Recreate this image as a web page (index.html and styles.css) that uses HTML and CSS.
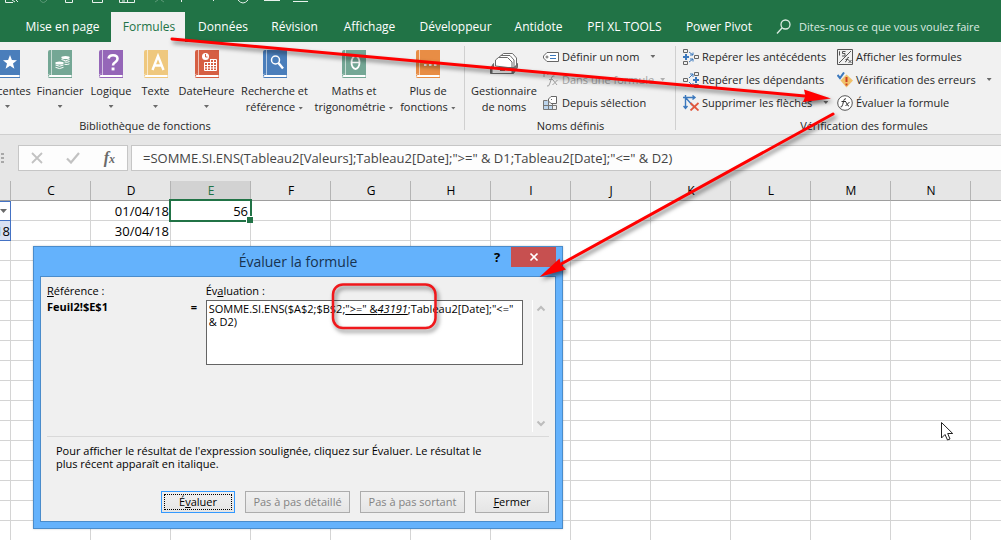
FILE: index.html
```
<!DOCTYPE html>
<html lang="fr">
<head>
<meta charset="utf-8">
<title>Évaluer la formule</title>
<link rel="stylesheet" href="styles.css">
</head>
<body>
<div class="app">
  <header class="top">
    <svg class="quick" width="320" height="4" viewBox="0 0 320 4" fill="none" stroke="#e8f1ec">
      <path d="M5.500 0V2.500H13M12 0l3 2M16 0l2 2M65.500 0V2.500H72.500V0M92.500 0V2.500H102.500V0M119.500 0V2.500H134.500V0M122 1h3M127.500 0v2M181.500 0v2M213.500 0v1M238 0q5 6 10 0M264 .500h16M293 1.500h15"/>
      <path stroke="#5c9877" d="M40 0q3 5 7 0M155 2l3-2M161 0l3 2"/>
    </svg>
    <nav class="tabs">
      <button class="tab">Mise en page</button>
      <button class="tab active">Formules</button>
      <button class="tab">Données</button>
      <button class="tab">Révision</button>
      <button class="tab">Affichage</button>
      <button class="tab">Développeur</button>
      <button class="tab">Antidote</button>
      <button class="tab">PFI XL TOOLS</button>
      <button class="tab">Power Pivot</button>
      <label class="tell"><svg width="16" height="16" viewBox="0 0 16 16" fill="none" stroke="#dcebe2" stroke-width="1.300"><circle cx="9.500" cy="5.500" r="4.500"/><path d="M6.200 8.800L1 14.500"/></svg><input type="text" placeholder="Dites-nous ce que vous voulez faire"></label>
    </nav>
  </header>

  <section class="ribbon">
    <div class="group library">
      <div class="bigs">
        <button class="big"><svg class="book blue" viewBox="0 0 24 28"><path class="c" d="M0 2a2 2 0 0 1 2-2H24V24H3a2 2 0 0 0-3 2z"/><path class="p" d="M0 26.500q0-2 2-2H24v3H2q-2 0-2-1"/><path class="s" d="M3.500 0v25"/><path fill="#fff" d="M14 5l1.900 5 5.100.200-4 3.300 1.400 5.200L14 15.800l-4.400 2.900L11 13.500l-4-3.300 5.100-.200z"/></svg><span>Récentes</span><i class="arr"></i></button>
        <button class="big"><svg class="book green" viewBox="0 0 24 28"><path class="c" d="M0 2a2 2 0 0 1 2-2H24V24H3a2 2 0 0 0-3 2z"/><path class="p" d="M0 26.500q0-2 2-2H24v3H2q-2 0-2-1"/><path class="s" d="M3.500 0v25"/><g fill="#fff"><ellipse cx="17.500" cy="7.500" rx="4.200" ry="1.500"/><ellipse cx="11.500" cy="13" rx="4.200" ry="1.500"/></g><path fill="none" stroke="#fff" d="M13.500 9.500q4 2.500 8 0M16.500 12q3 .700 5-.500M16.500 14.300q3 .700 5-.500M7.500 15q4 2.500 8 0M7.500 17.300q4 2.500 8 0"/></svg><span>Financier</span><i class="arr"></i></button>
        <button class="big"><svg class="book purple" viewBox="0 0 24 28"><path class="c" d="M0 2a2 2 0 0 1 2-2H24V24H3a2 2 0 0 0-3 2z"/><path class="p" d="M0 26.500q0-2 2-2H24v3H2q-2 0-2-1"/><path class="s" d="M3.500 0v25"/><path fill="none" stroke="#fff" stroke-width="2.600" d="M9.500 8.500Q10 5.300 14 5.300q4.500 0 4.500 3.500 0 2-2.200 3.300-2.300 1.200-2.300 3.400"/><path fill="#fff" d="M12.600 17.500h2.900v2.900h-2.900z"/></svg><span>Logique</span><i class="arr"></i></button>
        <button class="big"><svg class="book yellow" viewBox="0 0 24 28"><path class="c" d="M0 2a2 2 0 0 1 2-2H24V24H3a2 2 0 0 0-3 2z"/><path class="p" d="M0 26.500q0-2 2-2H24v3H2q-2 0-2-1"/><path class="s" d="M3.500 0v25"/><path fill="none" stroke="#fff" stroke-width="2.400" d="M8.500 20L14 6l5.500 14M10.500 15.500h7"/></svg><span>Texte</span><i class="arr"></i></button>
        <button class="big"><svg class="book red" viewBox="0 0 24 28"><path class="c" d="M0 2a2 2 0 0 1 2-2H24V24H3a2 2 0 0 0-3 2z"/><path class="p" d="M0 26.500q0-2 2-2H24v3H2q-2 0-2-1"/><path class="s" d="M3.500 0v25"/><circle cx="10.500" cy="6.500" r="3.500" fill="#fff"/><path fill="none" stroke="#d65f43" d="M10.500 4v3h2"/><path fill="none" stroke="#fff" d="M15 9.500h6.500v11h-12v-8M9.500 12.500h12M9.500 15.500h12M9.500 18h12M12.500 12v8M15.500 9.500v11M18.500 9.500v11"/></svg><span>DateHeure</span><i class="arr"></i></button>
        <button class="big"><svg class="book blue" viewBox="0 0 24 28"><path class="c" d="M0 2a2 2 0 0 1 2-2H24V24H3a2 2 0 0 0-3 2z"/><path class="p" d="M0 26.500q0-2 2-2H24v3H2q-2 0-2-1"/><path class="s" d="M3.500 0v25"/><circle cx="12.500" cy="10" r="4" fill="none" stroke="#fff" stroke-width="1.500"/><path stroke="#fff" stroke-width="2.400" d="M15.500 13l4.500 5.500"/></svg><span>Recherche et<br>référence<i class="arr in"></i></span></button>
        <button class="big"><svg class="book green" viewBox="0 0 24 28"><path class="c" d="M0 2a2 2 0 0 1 2-2H24V24H3a2 2 0 0 0-3 2z"/><path class="p" d="M0 26.500q0-2 2-2H24v3H2q-2 0-2-1"/><path class="s" d="M3.500 0v25"/><ellipse cx="13.500" cy="12.500" rx="4" ry="6.500" fill="none" stroke="#fff" stroke-width="1.800"/><path stroke="#fff" stroke-width="1.500" d="M10 12.500h7"/></svg><span>Maths et<br>trigonométrie<i class="arr in"></i></span></button>
        <button class="big"><svg class="book orange" viewBox="0 0 24 28"><path class="c" d="M0 2a2 2 0 0 1 2-2H24V24H3a2 2 0 0 0-3 2z"/><path class="p" d="M0 26.500q0-2 2-2H24v3H2q-2 0-2-1"/><path class="s" d="M3.500 0v25"/><path fill="#fff" d="M8 14h2.500v2H8zM13 14h2.500v2H13zM18 14h2.500v2H18z"/></svg><span>Plus de<br>fonctions<i class="arr in"></i></span></button>
      </div>
      <div class="caption">Bibliothèque de fonctions</div>
    </div>

    <div class="group names">
      <div class="cols">
        <button class="big"><svg class="mgr" viewBox="0 0 28 28" stroke="#6b6b6b" fill="#fff"><path d="M10.500 9V6l3-2.500h9l4 4.500v9h-4z"/><path d="M8 11V8l3-2.500h9l4 4.500v8h-4z"/><path d="M5.500 16v-6l3-2.500h9l4.500 4.500v6z"/><path fill="#777" d="M.500 23.500v-5l3-5v4h21l3-4v4l-4 6z"/><path fill="#fff" d="M2 18h20v5.500H2z"/><path d="M10 20.500h5"/></svg><span>Gestionnaire<br>de noms</span></button>
        <div class="list">
          <button class="row"><svg viewBox="0 0 16 16" fill="none"><path stroke="#666" fill="#fff" d="M15.500 3.500H4L.500 7v2L4 12.500h11.500z"/><circle cx="4" cy="8" r="1" stroke="#666"/><path stroke="#3b78bd" d="M7 6.500h6M7 9.500h6"/></svg><span>Définir un nom</span><i class="arr far"></i></button>
          <button class="row off"><svg viewBox="0 0 16 16" fill="none" stroke="#a0a0a0"><path d="M1 5q-1-4 2-4 2 0 2 2M4 14q2 1 3-3l1.500-5q.800-3 3-2M6 7.500h4M10 8l4 5M14.500 8l-5 5"/></svg><span>Dans une formule</span><i class="arr in"></i></button>
          <button class="row"><svg viewBox="0 0 16 16" fill="none"><path fill="#bcd5ed" d="M1 6h5v4h4v4H1z"/><path stroke="#777" d="M.500 5.500v9h13v-4M.500 10.500h13M5.500 6v8M9.500 9v6M.500 5.500h4"/><path fill="#fff" stroke="#666" d="M13.500 1.500H8L5.500 4v2L8 8.500h5.500z"/><path stroke="#666" d="M8 4.500h1"/></svg><span>Depuis sélection</span></button>
        </div>
      </div>
      <div class="caption">Noms définis</div>
    </div>

    <div class="group audit">
      <div class="cols">
        <div class="list first">
          <button class="row"><svg viewBox="0 0 16 16" fill="none" stroke="#666"><path d="M.500.500h4v3h-4zM.500 12.500h4v3h-4zM11.500 6.500h4v3h-4z"/><path stroke="#3b78bd" stroke-width="2" d="M0 8h6M3 5v6"/><path stroke="#3b78bd" d="M6 3l4 3M10 3.500V6H7M6 13l4-3M10 12.500V10H7"/></svg><span>Repérer les antécédents</span></button>
          <button class="row"><svg viewBox="0 0 16 16" fill="none" stroke="#666"><path d="M11.500.500h4v3h-4zM11.500 12.500h4v3h-4zM.500 6.500h4v3h-4z"/><path stroke="#3b78bd" stroke-width="2" d="M10 8h6M13 5v6"/><path stroke="#3b78bd" d="M6 6l4-4M7 2h3v3M6 10l4 4M7 14h3v-3"/></svg><span>Repérer les dépendants</span></button>
          <button class="row"><svg viewBox="0 0 16 16" fill="none" stroke="#3b78bd"><path stroke-width="1.400" d="M2.500 13V2.500H12M3 3l7 8M.500 11l2 2.500 2-2.500M9.500.500l2.500 2-2.500 2M0 2.500h5M2.500 0v5"/><path stroke="#e1583e" stroke-width="1.800" d="M7.500 8l8 7.500M15.500 8l-8 7.500"/></svg><span>Supprimer les flèches</span><i class="arr far"></i></button>
        </div>
        <div class="list">
          <button class="row"><svg viewBox="0 0 16 16" fill="none" stroke="#555"><path d="M.500.500h15v15H.500zM2 14L14 2"/><path d="M2.500 2.500v4M2 3h1M8.500 2.500h-3v2h2.500v2.500H5M8 13q1.500 0 2-3 .400-2 2-1.500M8.500 10.500h3M11.500 11l3 3M14.500 11l-3 3"/></svg><span>Afficher les formules</span></button>
          <button class="row"><svg viewBox="0 0 16 16" fill="none"><path fill="#f0c069" d="M9.500 2.500l6.500 6-6.500 7-6-7z"/><path stroke="#cf3f22" stroke-width="2" d="M9.500 5v5M9.500 11.500v2"/><path stroke="#3b78bd" stroke-width="2" d="M.500 3l2.500 3L7 .500"/></svg><span>Vérification des erreurs</span><i class="arr far"></i></button>
          <button class="row"><svg viewBox="0 0 16 16" fill="none" stroke="#555"><circle cx="8" cy="8" r="7.300" fill="#fff"/><path stroke="#333" d="M3.500 12q1.500.500 2.200-2.500L6.800 5.500Q7.300 3.300 9 3.800M4.500 6.500h4.500M8.500 7q1 0 1.500 2t2 2M12.500 7l-4 4"/></svg><span>Évaluer la formule</span></button>
        </div>
      </div>
      <div class="caption">Vérification des formules</div>
    </div>
  </section>

  <section class="fbar">
    <div class="grip"></div>
    <div class="tools">
      <button aria-label="Annuler"><svg width="12" height="12" viewBox="0 0 12 12" stroke="#c2c2c2" stroke-width="1.800"><path d="M1 1l10 10M11 1L1 11"/></svg></button>
      <button aria-label="Entrer"><svg width="14" height="12" viewBox="0 0 14 12" fill="none" stroke="#c2c2c2" stroke-width="2.200"><path d="M1 6.500L5 10.500 13 1"/></svg></button>
      <button aria-label="Insérer une fonction" class="fx">f<small>x</small></button>
    </div>
    <input class="formula" type="text" aria-label="Formule" value='=SOMME.SI.ENS(Tableau2[Valeurs];Tableau2[Date];"&gt;=" &amp; D1;Tableau2[Date];"&lt;=" &amp; D2)'>
  </section>

  <main class="sheet">
    <table>
      <colgroup><col class="edge"><col span="12" class="std"><col></colgroup>
      <thead><tr><th></th><th>C</th><th>D</th><th class="sel">E</th><th>F</th><th>G</th><th>H</th><th>I</th><th>J</th><th>K</th><th>L</th><th>M</th><th>N</th><th></th></tr></thead>
      <tbody>
        <tr><td class="filter"><i class="arr"></i></td><td></td><td>01/04/18</td><td class="cur">56</td><td></td><td></td><td></td><td></td><td></td><td></td><td></td><td></td><td></td><td></td></tr>
        <tr><td class="band">18</td><td></td><td>30/04/18</td><td></td><td></td><td></td><td></td><td></td><td></td><td></td><td></td><td></td><td></td><td></td></tr>
        <tr><td></td><td></td><td></td><td></td><td></td><td></td><td></td><td></td><td></td><td></td><td></td><td></td><td></td><td></td></tr>
        <tr><td></td><td></td><td></td><td></td><td></td><td></td><td></td><td></td><td></td><td></td><td></td><td></td><td></td><td></td></tr>
        <tr><td></td><td></td><td></td><td></td><td></td><td></td><td></td><td></td><td></td><td></td><td></td><td></td><td></td><td></td></tr>
        <tr><td></td><td></td><td></td><td></td><td></td><td></td><td></td><td></td><td></td><td></td><td></td><td></td><td></td><td></td></tr>
        <tr><td></td><td></td><td></td><td></td><td></td><td></td><td></td><td></td><td></td><td></td><td></td><td></td><td></td><td></td></tr>
        <tr><td></td><td></td><td></td><td></td><td></td><td></td><td></td><td></td><td></td><td></td><td></td><td></td><td></td><td></td></tr>
        <tr><td></td><td></td><td></td><td></td><td></td><td></td><td></td><td></td><td></td><td></td><td></td><td></td><td></td><td></td></tr>
        <tr><td></td><td></td><td></td><td></td><td></td><td></td><td></td><td></td><td></td><td></td><td></td><td></td><td></td><td></td></tr>
        <tr><td></td><td></td><td></td><td></td><td></td><td></td><td></td><td></td><td></td><td></td><td></td><td></td><td></td><td></td></tr>
        <tr><td></td><td></td><td></td><td></td><td></td><td></td><td></td><td></td><td></td><td></td><td></td><td></td><td></td><td></td></tr>
        <tr><td></td><td></td><td></td><td></td><td></td><td></td><td></td><td></td><td></td><td></td><td></td><td></td><td></td><td></td></tr>
        <tr><td></td><td></td><td></td><td></td><td></td><td></td><td></td><td></td><td></td><td></td><td></td><td></td><td></td><td></td></tr>
        <tr><td></td><td></td><td></td><td></td><td></td><td></td><td></td><td></td><td></td><td></td><td></td><td></td><td></td><td></td></tr>
        <tr><td></td><td></td><td></td><td></td><td></td><td></td><td></td><td></td><td></td><td></td><td></td><td></td><td></td><td></td></tr>
        <tr><td></td><td></td><td></td><td></td><td></td><td></td><td></td><td></td><td></td><td></td><td></td><td></td><td></td><td></td></tr>
      </tbody>
    </table>
  </main>

  <div class="dialog" role="dialog" aria-label="Évaluer la formule">
    <div class="dtitle">
      <h1>Évaluer la formule</h1>
      <div class="dctl"><button class="help" aria-label="Aide">?</button><button class="close" aria-label="Fermer la fenêtre"><svg width="10" height="10" viewBox="0 0 10 10" stroke="#fff" stroke-width="1.700"><path d="M1.500 1.500l7 7M8.500 1.500l-7 7"/></svg></button></div>
    </div>
    <div class="dbody">
      <div class="evalrow">
        <div class="ref"><div><u>R</u>éférence :</div><b>Feuil2!$E$1</b></div>
        <b class="eq">=</b>
        <div class="ev"><div>Év<u>a</u>luation :</div><div class="expr">SOMME.SI.ENS($A$2;$B$2;<u>"&gt;=" &amp;<em>43191</em></u>;Tableau2[Date];"&lt;=" &amp; D2)</div></div>
        <div class="sb"><svg width="10" height="7" viewBox="0 0 10 7" fill="none" stroke="#bdbdbd" stroke-width="2"><path d="M1.500 5.500L5 2l3.500 3.500"/></svg><svg width="10" height="7" viewBox="0 0 10 7" fill="none" stroke="#bdbdbd" stroke-width="2"><path d="M1.500 1.500L5 5l3.500-3.500"/></svg></div>
      </div>
      <p class="hint">Pour afficher le résultat de l'expression soulignée, cliquez sur Évaluer. Le résultat le plus récent apparaît en italique.</p>
      <div class="btns">
        <button class="btn focus"><span>É<u>v</u>aluer</span></button>
        <button class="btn wide" disabled>Pas à pas détaillé</button>
        <button class="btn wide" disabled>Pas à pas sortant</button>
        <button class="btn"><span><u>F</u>ermer</span></button>
      </div>
    </div>
  </div>

  <svg class="notes" width="1001" height="540" viewBox="0 0 1001 540">
    <g class="ink">
      <path class="line" d="M172 39L810 96.500"/><path class="head" d="M831 98.500L804 89.500l1.500 6.500-2.500 6z"/>
      <path class="line" d="M833 114L562 263.500"/><path class="head" d="M539.500 277l20-18.500 1.500 6 5 5z"/>
      <rect class="ring" x="333" y="284.500" width="102.500" height="43.500" rx="10"/>
    </g>
    <path fill="#fff" stroke="#222" d="M941.500 422.500v15.500l3.500-3.500 2.500 5.500 2.500-1-2.300-5.500h5z"/>
  </svg>
</div>
</body>
</html>
```
FILE: styles.css
```
* { box-sizing: border-box; }
body {
  margin: 0;
  font: 11px/16px "Open Sans", "Noto Sans", sans-serif;
  color: #262626;
}
button, input { font: inherit; color: inherit; border: 0; padding: 0; margin: 0; background: none; }
svg { display: block; flex: none; }
.app { position: relative; height: 100vh; overflow: hidden; display: flex; flex-direction: column; }

/* title strip and tabs */
.top { background: #217346; }
.quick { margin-bottom: 8px; }
.tabs {
  display: grid;
  grid-template-columns: 97px 76px 72px 71px 79px 93px 73px 99px 90px 1fr;
  padding-left: 13px;
  height: 30px;
}
.tab { color: #fff; font-size: 12px; white-space: nowrap; padding-left: 2px; }
.tab.active { color: #217346; background: #f1f1f1; margin-left: 1px; margin-right: 1px; }
.tell { display: flex; align-items: center; gap: 7px; padding-left: 13px; color: #dcebe2; }
.tell input { flex: 1; min-width: 0; font-size: 11px; }
.tell input::placeholder { color: #dcebe2; opacity: 1; }

/* ribbon */
.ribbon {
  display: flex;
  height: 93px;
  overflow: hidden;
  background: #f1f1f1;
  border-bottom: 1px solid #cfcfcf;
}
.group { display: flex; flex-direction: column; justify-content: space-between; flex: none; position: relative; }
.library { margin-left: -19px; width: 484px; }
.library .caption { padding-right: 156px; }
.names { width: 211px; }
.audit { width: 376px; }
.library::after, .names::after {
  content: ""; position: absolute; right: 0; top: 4px; bottom: 4px; width: 1px; background: #d0d0d0;
}
.bigs { display: grid; grid-template-columns: 53px 52px 50px 39px 63px 73px 86px 62px; }
.big { display: flex; flex-direction: column; align-items: center; padding-top: 8px; white-space: nowrap; }
.big > span { margin-top: 5px; }
.big > .arr { margin-top: 6px; }
.book { width: 24px; height: 28px; }
.book .c { fill: var(--c); }
.book .p { fill: #fff; stroke: var(--c); }
.book .s { stroke: #fff; fill: none; opacity: .6; }
.blue { --c: #4a7ebb; }
.green { --c: #74a795; }
.purple { --c: #9566b8; }
.yellow { --c: #efc87e; }
.red { --c: #d65f43; }
.orange { --c: #e88d45; }
.mgr { width: 28px; height: 28px; }
.arr { display: block; flex: none; width: 5px; height: 3px; background: #6a6a6a; clip-path: polygon(0 0, 100% 0, 50% 100%); }
.arr.in { display: inline-block; vertical-align: middle; margin-left: 3px; }
.arr.far { margin-left: 8px; }
.caption { text-align: center; }
.cols { display: flex; }
.names .big { width: 78px; }
.list { display: flex; flex-direction: column; padding-top: 3px; }
.list.first { width: 161px; padding-left: 7px; }
.row { display: flex; align-items: center; height: 23px; gap: 3px; white-space: nowrap; }
.row svg { width: 16px; height: 16px; }
.row.off { color: #a6a6a6; }
.row.off .arr { background: #b0b0b0; }

/* formula bar */
.fbar { display: flex; height: 46px; padding: 10px 0; background: #e6e6e6; }
.grip { width: 3px; height: 11px; margin: 8px 14px 0 1px; background: repeating-linear-gradient(#a8a8a8 0 2px, transparent 2px 4px); }
.tools { display: flex; align-items: center; justify-content: space-between; width: 110px; padding: 0 12px; background: #fdfdfd; border: 1px solid #c6c6c6; }
.fx { font: italic bold 16px/20px "Liberation Serif", serif; color: #6a6a6a; }
.fx small { font-size: 12px; }
.formula { flex: 1; min-width: 0; margin-left: 3px; padding-left: 11px; font-size: 13px; color: #444; background: #fdfdfd; border: 1px solid #c6c6c6; border-right: 0; }

/* worksheet */
.sheet { flex: 1; background: #fff; overflow: hidden; }
table { width: 100%; table-layout: fixed; border-collapse: separate; border-spacing: 0; font-size: 13px; color: #000; }
.edge { width: 11px; }
.std { width: 80px; }
th { height: 20px; padding: 0 0 0 1px; font-weight: 400; font-size: 12px; line-height: 18px; background: #e6e6e6; border-right: 1px solid #b4b4b4; border-bottom: 1px solid #9e9e9e; }
th.sel { background: #d2d2d2; color: #217346; border-bottom: 0; }
td { height: 20px; padding: 0 1px 0 0; line-height: 18px; text-align: right; border-right: 1px solid #d4d4d4; border-bottom: 1px solid #d4d4d4; }
th:last-child, td:last-child { border-right: 0; }
td.cur { position: relative; padding-right: 2px; }
.cur::before { content: ""; position: absolute; inset: -2px; border: 2px solid #217346; }
.cur::after { content: ""; position: absolute; right: -3px; bottom: -3px; width: 6px; height: 6px; background: #217346; border: solid #fff; border-width: 1px 0 0 1px; }
td.filter { border: 1px solid #4472c4; border-left: 0; }
.filter .arr { width: 7px; height: 4px; }
td.band { direction: rtl; overflow: hidden; background: #d9e1f2; border-color: #4472c4; }

/* dialog window */
.dialog {
  position: absolute; left: 33px; top: 246px; width: 530px;
  padding: 0 6px 6px; background: #64b2fc; border: 1px solid #4a8ccb; color: #000;
  box-shadow: 0 0 2px rgba(0, 0, 0, .2);
}
.dtitle { position: relative; height: 29px; }
.dtitle h1 { margin: 0; font-size: 14px; font-weight: 400; line-height: 29px; text-align: center; color: #173350; }
.dctl { position: absolute; right: 0; top: 0; display: flex; height: 20px; }
.help { width: 28px; font-size: 13px; font-weight: 700; }
.close { display: flex; align-items: center; justify-content: center; width: 45px; background: #c75050; }
.dbody { padding: 6px 6px 8px; background: #f0f0f0; border: 1px solid #4a8ccb; line-height: 13px; }
.evalrow { display: flex; height: 154px; border-bottom: 1px solid #d9d9d9; }
.ref { width: 144px; line-height: 16px; }
.eq { width: 15px; padding-top: 16px; line-height: 16px; }
.ev { width: 318px; line-height: 16px; }
.expr { height: 65px; padding: 1px 2px; margin-top: 1px; line-height: 13px; background: #fff; border: 1px solid #646464; }
.sb { display: flex; flex-direction: column; justify-content: space-between; margin: 17px 0 4px 9px; padding: 5px 3px; border-left: 1px solid #fff; }
.hint { margin: 7px 50px 0 9px; }
.btns { display: flex; justify-content: flex-end; gap: 10px; margin-top: 21px; }
.btn { width: 74px; height: 22px; border: 1px solid #acacac; background: linear-gradient(#f0f0f0, #e5e5e5); color: #000; line-height: 16px; }
.btn.wide { width: 105px; }
.btn:disabled { color: #838383; }
.btn.focus { border-color: #3399ff; padding: 2px; }
.btn.focus span { display: block; border: 1px dotted #000; line-height: 14px; }

/* red callouts and pointer */
.notes { position: absolute; left: 0; top: 0; pointer-events: none; }
.ink { filter: drop-shadow(2px 3px 2px rgba(0, 0, 0, .5)); }
.line { stroke: #f00; stroke-width: 3; stroke-linecap: round; }
.head { fill: #f00; }
.ring { fill: none; stroke: #f0181c; stroke-width: 2.500; }
```
